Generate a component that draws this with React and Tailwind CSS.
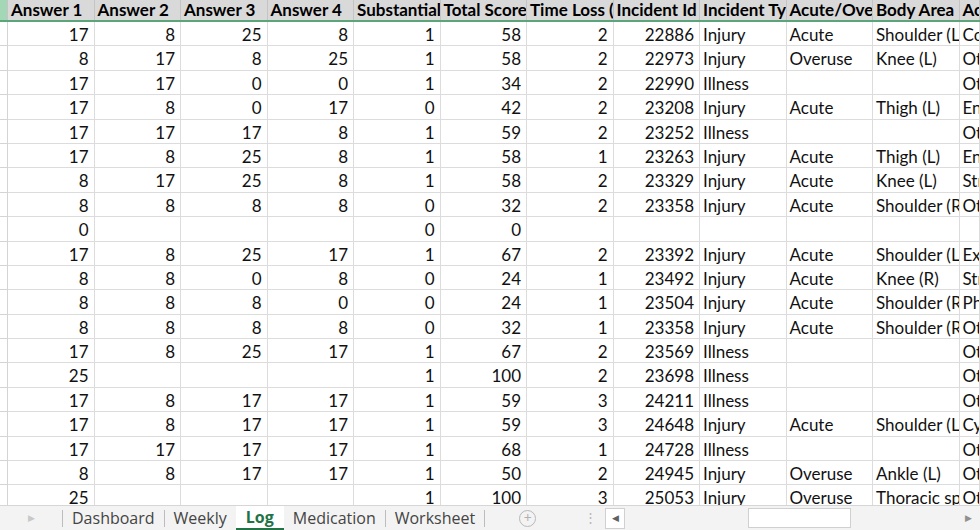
import React from "react";

const headers = [
  "Answer 1",
  "Answer 2",
  "Answer 3",
  "Answer 4",
  "Substantial Change",
  "Total Score",
  "Time Loss (days)",
  "Incident Id",
  "Incident Type",
  "Acute/Overuse",
  "Body Area",
  "Activity",
];

// numeric columns are right aligned, the rest left
const numCols = 8;

const rows = [
  [17, 8, 25, 8, 1, 58, 2, 22886, "Injury", "Acute", "Shoulder (L)", "Contact"],
  [8, 17, 8, 25, 1, 58, 2, 22973, "Injury", "Overuse", "Knee (L)", "Other"],
  [17, 17, 0, 0, 1, 34, 2, 22990, "Illness", "", "", "Other"],
  [17, 8, 0, 17, 0, 42, 2, 23208, "Injury", "Acute", "Thigh (L)", "Endurance"],
  [17, 17, 17, 8, 1, 59, 2, 23252, "Illness", "", "", "Other"],
  [17, 8, 25, 8, 1, 58, 1, 23263, "Injury", "Acute", "Thigh (L)", "Endurance"],
  [8, 17, 25, 8, 1, 58, 2, 23329, "Injury", "Acute", "Knee (L)", "Strength"],
  [8, 8, 8, 8, 0, 32, 2, 23358, "Injury", "Acute", "Shoulder (R)", "Other"],
  [0, "", "", "", 0, 0, "", "", "", "", "", ""],
  [17, 8, 25, 17, 1, 67, 2, 23392, "Injury", "Acute", "Shoulder (L)", "Exercise"],
  [8, 8, 0, 8, 0, 24, 1, 23492, "Injury", "Acute", "Knee (R)", "Strength"],
  [8, 8, 8, 0, 0, 24, 1, 23504, "Injury", "Acute", "Shoulder (R)", "Physical"],
  [8, 8, 8, 8, 0, 32, 1, 23358, "Injury", "Acute", "Shoulder (R)", "Other"],
  [17, 8, 25, 17, 1, 67, 2, 23569, "Illness", "", "", "Other"],
  [25, "", "", "", 1, 100, 2, 23698, "Illness", "", "", "Other"],
  [17, 8, 17, 17, 1, 59, 3, 24211, "Illness", "", "", "Other"],
  [17, 8, 17, 17, 1, 59, 3, 24648, "Injury", "Acute", "Shoulder (L)", "Cycling"],
  [17, 17, 17, 17, 1, 68, 1, 24728, "Illness", "", "", "Other"],
  [8, 8, 17, 17, 1, 50, 2, 24945, "Injury", "Overuse", "Ankle (L)", "Other"],
  [25, "", "", "", 1, 100, 3, 25053, "Injury", "Overuse", "Thoracic spine", "Other"],
];

const tabs = ["Dashboard", "Weekly", "Log", "Medication", "Worksheet"];

const grid = "grid grid-cols-[8px_repeat(11,86.5px)_1fr]";

export default function App() {
  return (
    <div
      className="w-[980px] h-[530px] flex flex-col bg-white overflow-hidden"
      style={{ fontFamily: "Lato, 'Liberation Sans', sans-serif" }}
    >
      {/* SHEET */}
      <div className="h-[505px] overflow-hidden">
        {/* HEADER ROW */}
        <div className={`${grid} h-[22px] bg-[#d9d9d9] border-b-2 border-[#5aa67a]`}>
          <div className="bg-[#a3d7b6] border-r border-[#c4c4c4]" />
          {headers.map((h) => (
            <div
              key={h}
              className="border-r border-[#c4c4c4] pl-[3px] overflow-hidden whitespace-nowrap text-[17px] font-bold leading-[20px] text-black"
            >
              {h}
            </div>
          ))}
        </div>

        {/* DATA ROWS */}
        {rows.map((r, i) => (
          <div key={i} className={`${grid} h-[24.4px]`}>
            <div className="border-r border-b border-[#d4d4d4]" />
            {r.map((v, j) => (
              <div
                key={j}
                className={`border-r border-b border-[#dcdcdc] overflow-hidden whitespace-nowrap text-[17px] leading-[26px] text-[#111] ${
                  j < numCols ? "text-right pr-[5px]" : "text-left pl-[3px]"
                }`}
              >
                {v}
              </div>
            ))}
          </div>
        ))}
      </div>

      {/* TAB BAR */}
      <div
        className="h-[25px] flex items-center bg-[#f3f3f3] border-t border-[#d6d6d6] text-[16px] text-[#444]"
        style={{ fontFamily: "'Open Sans', 'Liberation Sans', sans-serif" }}
      >
        <div className="w-[62px] h-full flex items-center justify-center">
          <span className="text-[9px] text-[#c8c8c8]">▶</span>
        </div>
        <div className="w-px h-[17px] bg-[#bdbdbd]" />
        {tabs.map((t, i) =>
          t === "Log" ? (
            <div
              key={t}
              className="h-full px-[10px] bg-white border-b-2 border-[#217346] flex items-center font-bold text-[#217346]"
            >
              {t}
            </div>
          ) : (
            <React.Fragment key={t}>
              <div className="h-full px-[9px] flex items-center">{t}</div>
              {tabs[i + 1] !== "Log" && <div className="w-px h-[17px] bg-[#bdbdbd]" />}
            </React.Fragment>
          )
        )}
        <div className="w-[34px]" />
        <div className="w-[17px] h-[17px] rounded-full border border-[#b8b8b8] flex items-center justify-center text-[#b0b0b0] text-[14px] leading-none">
          +
        </div>
        <div className="ml-[48px] text-[#b5b5b5] text-[13px]">⋮</div>
        <div className="ml-[8px] w-[20px] h-[21px] bg-white border border-[#d0d0d0] flex items-center justify-center">
          <span className="text-[9px] text-[#606060]">◀</span>
        </div>
        <div className="flex-1 h-full flex items-center pl-[123px]">
          <div className="w-[103px] h-[20px] bg-white border border-[#d0d0d0]" />
        </div>
        <div className="w-[20px] h-full flex items-center justify-center mr-[2px]">
          <span className="text-[9px] text-[#909090]">▶</span>
        </div>
      </div>
    </div>
  );
}
